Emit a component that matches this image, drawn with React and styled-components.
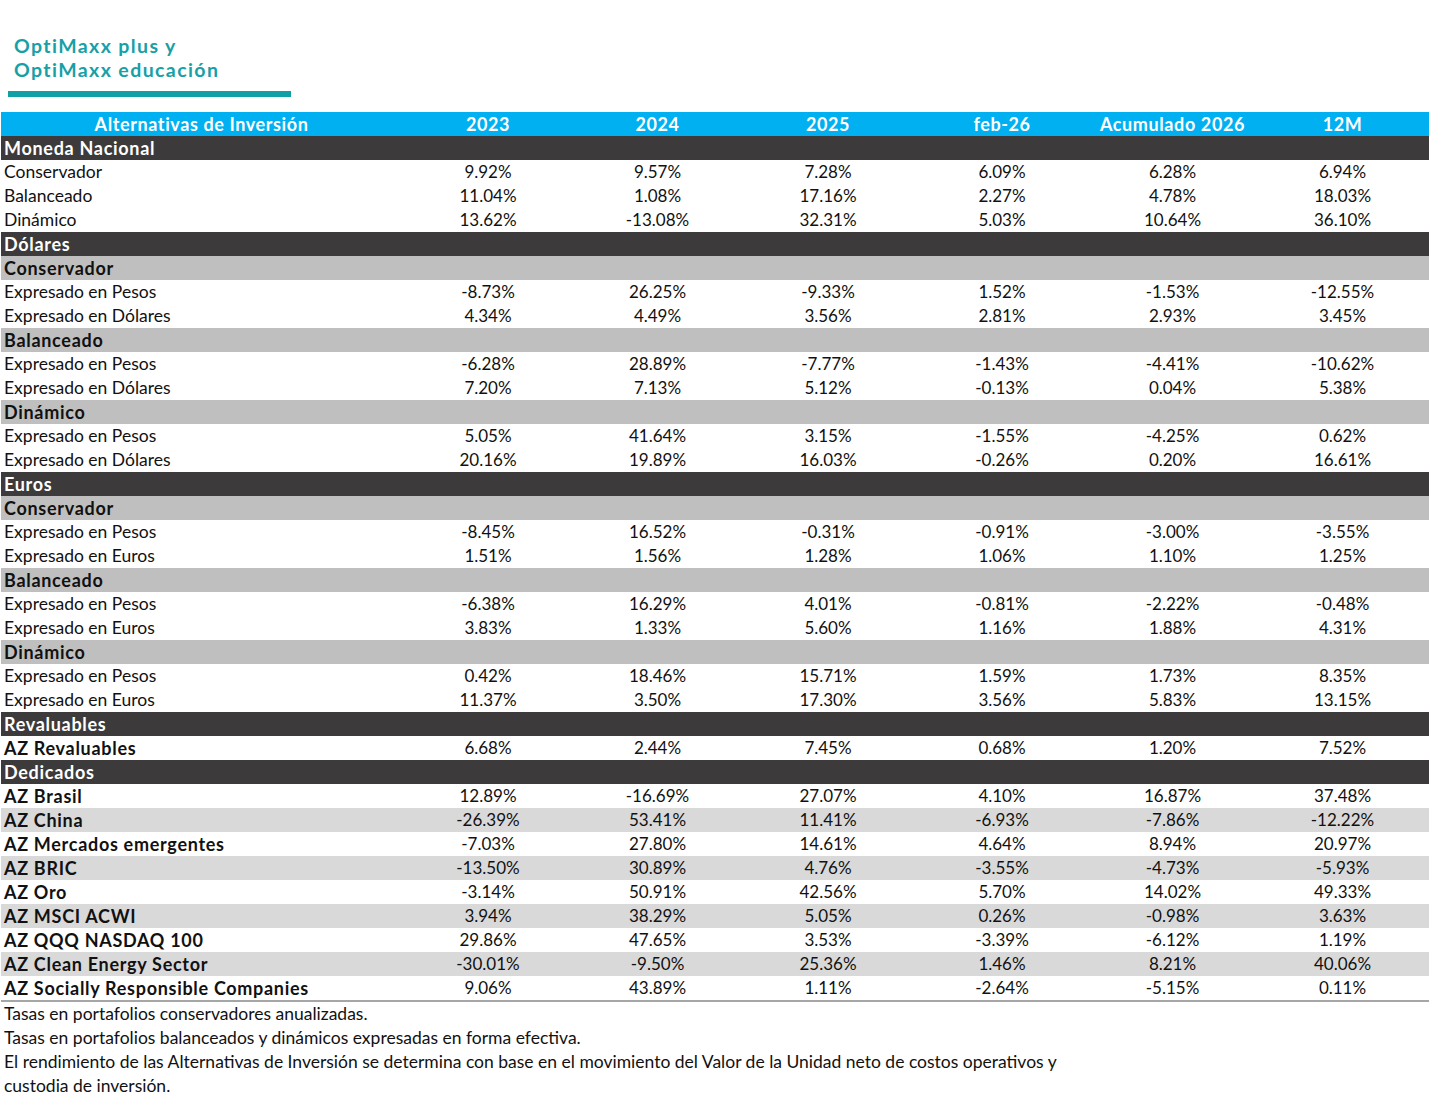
import React from "react";
import styled, { createGlobalStyle } from "styled-components";

const GlobalStyle = createGlobalStyle`
  body {
    margin: 0;
    background: #ffffff;
    font-family: Lato, "Noto Sans", sans-serif;
    color: #111111;
  }
`;

// kind: dark (currency heading), gray (profile heading), plain, fund (bold), fundAlt (bold on gray)
const rows = [
  { kind: "dark", label: "Moneda Nacional" },
  { kind: "plain", label: "Conservador", v: ["9.92%", "9.57%", "7.28%", "6.09%", "6.28%", "6.94%"] },
  { kind: "plain", label: "Balanceado", v: ["11.04%", "1.08%", "17.16%", "2.27%", "4.78%", "18.03%"] },
  { kind: "plain", label: "Dinámico", v: ["13.62%", "-13.08%", "32.31%", "5.03%", "10.64%", "36.10%"] },
  { kind: "dark", label: "Dólares" },
  { kind: "gray", label: "Conservador" },
  { kind: "plain", label: "Expresado en Pesos", v: ["-8.73%", "26.25%", "-9.33%", "1.52%", "-1.53%", "-12.55%"] },
  { kind: "plain", label: "Expresado en Dólares", v: ["4.34%", "4.49%", "3.56%", "2.81%", "2.93%", "3.45%"] },
  { kind: "gray", label: "Balanceado" },
  { kind: "plain", label: "Expresado en Pesos", v: ["-6.28%", "28.89%", "-7.77%", "-1.43%", "-4.41%", "-10.62%"] },
  { kind: "plain", label: "Expresado en Dólares", v: ["7.20%", "7.13%", "5.12%", "-0.13%", "0.04%", "5.38%"] },
  { kind: "gray", label: "Dinámico" },
  { kind: "plain", label: "Expresado en Pesos", v: ["5.05%", "41.64%", "3.15%", "-1.55%", "-4.25%", "0.62%"] },
  { kind: "plain", label: "Expresado en Dólares", v: ["20.16%", "19.89%", "16.03%", "-0.26%", "0.20%", "16.61%"] },
  { kind: "dark", label: "Euros" },
  { kind: "gray", label: "Conservador" },
  { kind: "plain", label: "Expresado en Pesos", v: ["-8.45%", "16.52%", "-0.31%", "-0.91%", "-3.00%", "-3.55%"] },
  { kind: "plain", label: "Expresado en Euros", v: ["1.51%", "1.56%", "1.28%", "1.06%", "1.10%", "1.25%"] },
  { kind: "gray", label: "Balanceado" },
  { kind: "plain", label: "Expresado en Pesos", v: ["-6.38%", "16.29%", "4.01%", "-0.81%", "-2.22%", "-0.48%"] },
  { kind: "plain", label: "Expresado en Euros", v: ["3.83%", "1.33%", "5.60%", "1.16%", "1.88%", "4.31%"] },
  { kind: "gray", label: "Dinámico" },
  { kind: "plain", label: "Expresado en Pesos", v: ["0.42%", "18.46%", "15.71%", "1.59%", "1.73%", "8.35%"] },
  { kind: "plain", label: "Expresado en Euros", v: ["11.37%", "3.50%", "17.30%", "3.56%", "5.83%", "13.15%"] },
  { kind: "dark", label: "Revaluables" },
  { kind: "fund", label: "AZ Revaluables", v: ["6.68%", "2.44%", "7.45%", "0.68%", "1.20%", "7.52%"] },
  { kind: "dark", label: "Dedicados" },
  { kind: "fund", label: "AZ Brasil", v: ["12.89%", "-16.69%", "27.07%", "4.10%", "16.87%", "37.48%"] },
  { kind: "fundAlt", label: "AZ China", v: ["-26.39%", "53.41%", "11.41%", "-6.93%", "-7.86%", "-12.22%"] },
  { kind: "fund", label: "AZ Mercados emergentes", v: ["-7.03%", "27.80%", "14.61%", "4.64%", "8.94%", "20.97%"] },
  { kind: "fundAlt", label: "AZ BRIC", v: ["-13.50%", "30.89%", "4.76%", "-3.55%", "-4.73%", "-5.93%"] },
  { kind: "fund", label: "AZ Oro", v: ["-3.14%", "50.91%", "42.56%", "5.70%", "14.02%", "49.33%"] },
  { kind: "fundAlt", label: "AZ MSCI ACWI", v: ["3.94%", "38.29%", "5.05%", "0.26%", "-0.98%", "3.63%"] },
  { kind: "fund", label: "AZ QQQ NASDAQ 100", v: ["29.86%", "47.65%", "3.53%", "-3.39%", "-6.12%", "1.19%"] },
  { kind: "fundAlt", label: "AZ Clean Energy Sector", v: ["-30.01%", "-9.50%", "25.36%", "1.46%", "8.21%", "40.06%"] },
  { kind: "fund", label: "AZ Socially Responsible Companies", v: ["9.06%", "43.89%", "1.11%", "-2.64%", "-5.15%", "0.11%"] },
];

const headers = ["2023", "2024", "2025", "feb-26", "Acumulado 2026", "12M"];

const notes = [
  "Tasas en portafolios conservadores anualizadas.",
  "Tasas en portafolios balanceados y dinámicos expresadas en forma efectiva.",
  "El rendimiento de las Alternativas de Inversión se determina con base en el movimiento del Valor de la Unidad neto de costos operativos y",
  "custodia de inversión.",
];

const bg = {
  dark: "#3c3a3b",
  gray: "#bfbfbf",
  plain: "#ffffff",
  fund: "#ffffff",
  fundAlt: "#d9d9d9",
};

const Page = styled.div`
  width: 1429px;
  padding-top: 34px;
`;

const Brand = styled.div`
  padding-left: 14px;
  color: #17a0a6;
  font-family: Lato, "Noto Sans", sans-serif;
  font-weight: 700;
  font-size: 19.5px;
  line-height: 24px;
  letter-spacing: 1.4px;
`;

const BrandLine = styled.div`
  height: 24px;
  white-space: nowrap;
`;

const BrandBar = styled.div`
  margin: 9px 0 15px 8px;
  width: 283px;
  height: 6px;
  background: #109fa6;
`;

const Grid = styled.div`
  margin-left: 1px;
  display: grid;
  grid-template-columns: 401px 172px 167px 174px 174px 167px 173px;
`;

const Row = styled.div`
  display: contents;
`;

const HeadCell = styled.div`
  height: 24px;
  line-height: 25px;
  background: #00b0f0;
  color: #ffffff;
  font-weight: 700;
  font-size: 18px;
  letter-spacing: 0.6px;
  text-align: center;
  white-space: nowrap;
`;

const Label = styled.div`
  height: 24px;
  line-height: 24px;
  padding-left: 3px;
  white-space: nowrap;
  background: ${(p) => bg[p.$kind]};
  color: ${(p) => (p.$kind === "dark" ? "#ffffff" : "#111111")};
  font-size: ${(p) => (p.$kind === "plain" ? "17.5px" : "18px")};
  font-weight: ${(p) => (p.$kind === "plain" ? 400 : 700)};
  letter-spacing: ${(p) => (p.$kind === "plain" ? "0" : "0.7px")};
`;

const Value = styled.div`
  height: 24px;
  line-height: 24px;
  font-size: 17px;
  text-align: center;
  background: ${(p) => bg[p.$kind]};
  color: #111111;
`;

const Rule = styled.div`
  grid-column: 1 / -1;
  height: 2px;
  background: #a6a6a6;
`;

const Notes = styled.div`
  padding-left: 4px;
  font-size: 17.5px;
  line-height: 24px;
  color: #111111;
`;

export default function App() {
  return (
    <Page>
      <GlobalStyle />
      <Brand>
        <BrandLine>OptiMaxx plus y</BrandLine>
        <BrandLine>OptiMaxx educación</BrandLine>
      </Brand>
      <BrandBar />
      <Grid>
        <Row>
          <HeadCell>Alternativas de Inversión</HeadCell>
          {headers.map((h) => (
            <HeadCell key={h}>{h}</HeadCell>
          ))}
        </Row>
        {rows.map((r, i) => (
          <Row key={i}>
            <Label $kind={r.kind}>{r.label}</Label>
            {(r.v || ["", "", "", "", "", ""]).map((val, j) => (
              <Value key={j} $kind={r.kind}>
                {val}
              </Value>
            ))}
          </Row>
        ))}
        <Rule />
      </Grid>
      <Notes>
        {notes.map((n) => (
          <div key={n}>{n}</div>
        ))}
      </Notes>
    </Page>
  );
}
